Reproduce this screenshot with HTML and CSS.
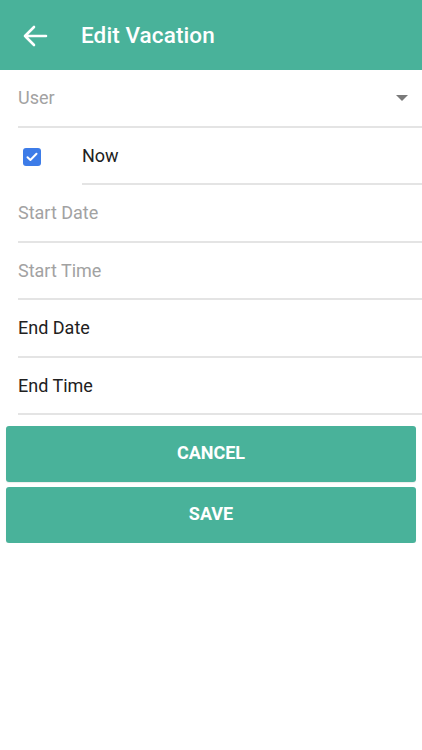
FILE: index.html
```html
<!DOCTYPE html>
<html>
<head>
<meta charset="utf-8">
<link rel="stylesheet" href="styles.css">
</head>
<body>
<header class="appbar">
  <svg class="back" width="26" height="24" viewBox="0 0 26 24">
    <path d="M24 12H3 M12 3L3 12L12 21" fill="none" stroke="#fff" stroke-width="2.6" stroke-linecap="round" stroke-linejoin="round"/>
  </svg>
  <h1 class="title">Edit Vacation</h1>
</header>
<main class="form">
  <div class="row select">
    <span class="placeholder">User</span>
    <span class="caret"></span>
  </div>
  <div class="check-row">
    <span class="checkbox">
      <svg width="12" height="10" viewBox="0 0 12 10"><path d="M1.5 5.2L4.4 8L10.5 1.8" fill="none" stroke="#fff" stroke-width="2" stroke-linecap="round" stroke-linejoin="round"/></svg>
    </span>
    <div class="row field"><span class="value">Now</span></div>
  </div>
  <div class="row"><span class="placeholder">Start Date</span></div>
  <div class="row"><span class="placeholder">Start Time</span></div>
  <div class="row"><span class="value">End Date</span></div>
  <div class="row"><span class="value">End Time</span></div>
  <div class="actions">
    <button class="btn">CANCEL</button>
    <button class="btn">SAVE</button>
  </div>
</main>
</body>
</html>
```

FILE: styles.css
```css
html, body {
  margin: 0;
  padding: 0;
  background: #fff;
  font-family: Roboto, "Liberation Sans", sans-serif;
}
.appbar {
  height: 70px;
  background: #49b29a;
  display: flex;
  align-items: center;
  padding-left: 22px;
  box-sizing: border-box;
}
.back {
  display: block;
  margin-top: 1px;
}
.title {
  margin: 0 0 0 33px;
  color: #fff;
  font-size: 22.5px;
  font-weight: 500;
  letter-spacing: 0.1px;
}
.form {
  display: flex;
  flex-direction: column;
}
.row {
  height: 55.5px;
  margin-left: 18px;
  border-bottom: 2px solid #e4e4e4;
  display: flex;
  align-items: center;
  font-size: 18px;
}
.row.select {
  justify-content: space-between;
  padding-right: 14px;
}
.placeholder {
  color: #a2a2a2;
}
.value {
  color: #212121;
}
.caret {
  width: 0;
  height: 0;
  border-left: 6px solid transparent;
  border-right: 6px solid transparent;
  border-top: 6px solid #7a7a7a;
  margin-top: 1px;
}
.check-row {
  display: flex;
  align-items: flex-start;
}
.checkbox {
  width: 18px;
  height: 18px;
  margin: 20px 0 0 23px;
  background: #3d7ce8;
  border-radius: 3px;
  display: flex;
  align-items: center;
  justify-content: center;
  flex: none;
}
.row.field {
  flex: 1;
  margin-left: 41px;
}
.actions {
  display: flex;
  flex-direction: column;
  gap: 5px;
  margin: 11px 6px 0;
}
.btn {
  height: 56px;
  padding: 0 0 4px;
  border: none;
  border-radius: 3px;
  background: #49b29a;
  color: #fff;
  font-family: Roboto, "Liberation Sans", sans-serif;
  font-size: 18px;
  font-weight: 700;
  box-shadow: 0 1px 1px rgba(0,0,0,0.08);
}
```
